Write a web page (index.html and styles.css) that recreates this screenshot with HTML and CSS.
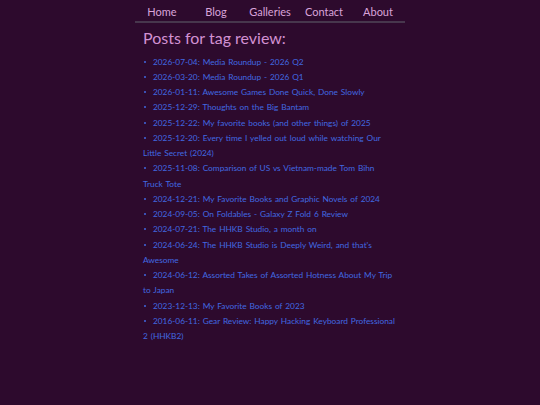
FILE: index.html
```html
<!DOCTYPE html>
<html>
<head>
<meta charset="utf-8">
<link rel="stylesheet" href="styles.css">
</head>
<body>
<div class="page">
  <nav class="nav">
    <a href="#">Home</a>
    <a href="#">Blog</a>
    <a href="#">Galleries</a>
    <a href="#">Contact</a>
    <a href="#">About</a>
  </nav>
  <main class="content">
    <h1 class="title">Posts for tag review:</h1>
    <ul class="posts">
      <li><a href="#">2026-07-04: Media Roundup - 2026 Q2</a></li>
      <li><a href="#">2026-03-20: Media Roundup - 2026 Q1</a></li>
      <li><a href="#">2026-01-11: Awesome Games Done Quick, Done Slowly</a></li>
      <li><a href="#">2025-12-29: Thoughts on the Big Bantam</a></li>
      <li><a href="#">2025-12-22: My favorite books (and other things) of 2025</a></li>
      <li><a href="#">2025-12-20: Every time I yelled out loud while watching Our Little Secret (2024)</a></li>
      <li><a href="#">2025-11-08: Comparison of US vs Vietnam-made Tom Bihn Truck Tote</a></li>
      <li><a href="#">2024-12-21: My Favorite Books and Graphic Novels of 2024</a></li>
      <li><a href="#">2024-09-05: On Foldables - Galaxy Z Fold 6 Review</a></li>
      <li><a href="#">2024-07-21: The HHKB Studio, a month on</a></li>
      <li><a href="#">2024-06-24: The HHKB Studio is Deeply Weird, and that's Awesome</a></li>
      <li><a href="#">2024-06-12: Assorted Takes of Assorted Hotness About My Trip to Japan</a></li>
      <li><a href="#">2023-12-13: My Favorite Books of 2023</a></li>
      <li><a href="#">2016-06-11: Gear Review: Happy Hacking Keyboard Professional 2 (HHKB2)</a></li>
    </ul>
  </main>
</div>
</body>
</html>
```
FILE: styles.css
```css
html, body {
  margin: 0;
  padding: 0;
  background: #2d0a2d;
}
body {
  font-family: "Lato", "DejaVu Sans", sans-serif;
}
.page {
  width: 270px;
  margin: 0 auto;
}
.nav {
  display: grid;
  grid-template-columns: repeat(5, 1fr);
  height: 21px;
  align-items: center;
  border-bottom: 2px solid #47374d;
}
.nav a {
  color: #d9a3d9;
  text-decoration: none;
  text-align: center;
  font-size: 11px;
  padding-top: 2px;
}
.content {
  padding: 0 9.5px 0 8px;
}
.title {
  margin: 5px 0 6.5px;
  font-size: 16px;
  font-weight: normal;
  color: #d291d2;
  line-height: 20px;
}
.posts {
  list-style: none;
  margin: 0;
  padding: 0;
  color: #4169e1;
  font-size: 8.3px;
  line-height: 15.25px;
  word-spacing: 0.8px;
}
.posts li::before {
  content: "";
  display: inline-block;
  width: 2px;
  height: 2px;
  border-radius: 50%;
  background: #4169e1;
  margin: 0 7px 0 1px;
  vertical-align: 2px;
}
.posts a {
  color: #4169e1;
  text-decoration: none;
}
```
